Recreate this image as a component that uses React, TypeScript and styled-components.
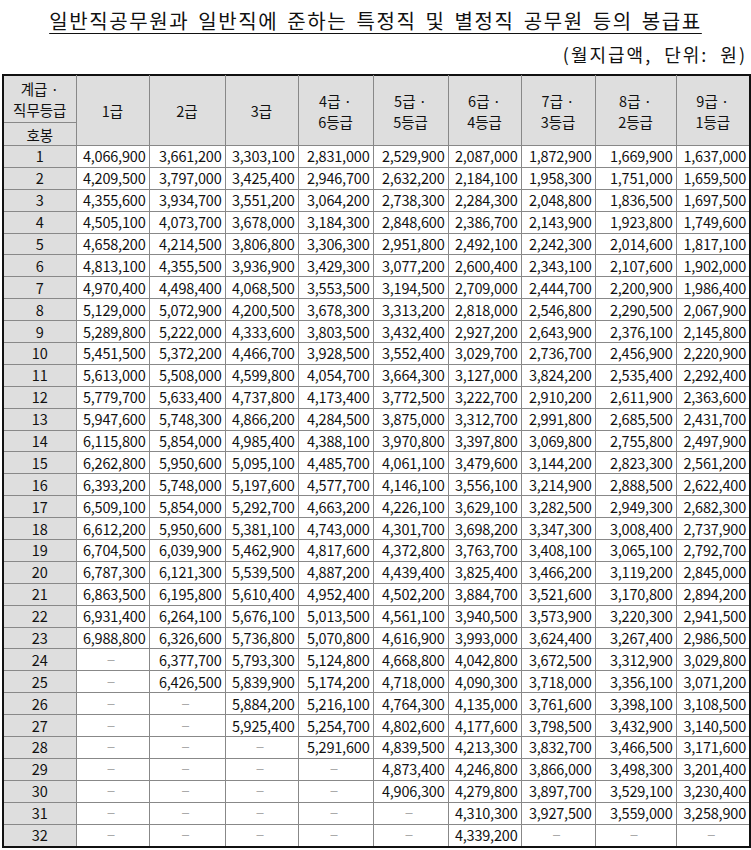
import React from 'react'
import styled, { createGlobalStyle } from 'styled-components'

const GlobalStyle = createGlobalStyle`
  body {
    margin: 0;
    background: #fff;
    font-family: "Noto Sans CJK KR", "Noto Sans", sans-serif;
  }
`

const Page = styled.div`
  width: 751px;
  padding: 7px 2px 0 2px;
  box-sizing: border-box;
`

const Title = styled.h1`
  margin: 0;
  text-align: center;
  font-size: 20px;
  font-weight: 400;
  letter-spacing: 1.6px;
  word-spacing: 3px;
  line-height: 28px;
  color: #111;
  text-decoration: underline;
  text-underline-offset: 4px;
  text-decoration-thickness: 1px;
`

const Unit = styled.div`
  text-align: right;
  font-size: 18px;
  letter-spacing: 2px;
  word-spacing: 6px;
  line-height: 26px;
  margin: 6px 2px 7px 0;
  color: #111;
`

const Table = styled.table`
  width: 747px;
  border-collapse: collapse;
  table-layout: fixed;
  border: 2px solid #111;
  font-size: 14.5px;
  color: #111;
`

const HeadCell = styled.th<{ $h?: number }>`
  background: #dedede;
  font-weight: 400;
  border: 1px solid #888;
  height: ${p => p.$h ?? 22}px;
  padding: 0;
  line-height: 21px;
  text-align: center;
`

const StepCell = styled.td`
  background: #dedede;
  border: 1px solid #888;
  text-align: center;
  height: 20.9px;
  padding: 0;
  line-height: 20px;
`

const Cell = styled.td<{ $empty?: boolean }>`
  border: 1px solid #888;
  text-align: ${p => (p.$empty ? 'center' : 'right')};
  color: ${p => (p.$empty ? '#aaa' : '#111')};
  padding: 0 3px 0 0;
  height: 20.9px;
  line-height: 20px;
  letter-spacing: -0.2px;
  white-space: nowrap;
`

const widths = [73, 76, 73, 75, 75, 73, 74, 81, 74]
const grades = ['1급', '2급', '3급', '4급 ·\n6등급', '5급 ·\n5등급', '6급 ·\n4등급', '7급 ·\n3등급', '8급 ·\n2등급', '9급 ·\n1등급']

const raw = `4,066,900 3,661,200 3,303,100 2,831,000 2,529,900 2,087,000 1,872,900 1,669,900 1,637,000
4,209,500 3,797,000 3,425,400 2,946,700 2,632,200 2,184,100 1,958,300 1,751,000 1,659,500
4,355,600 3,934,700 3,551,200 3,064,200 2,738,300 2,284,300 2,048,800 1,836,500 1,697,500
4,505,100 4,073,700 3,678,000 3,184,300 2,848,600 2,386,700 2,143,900 1,923,800 1,749,600
4,658,200 4,214,500 3,806,800 3,306,300 2,951,800 2,492,100 2,242,300 2,014,600 1,817,100
4,813,100 4,355,500 3,936,900 3,429,300 3,077,200 2,600,400 2,343,100 2,107,600 1,902,000
4,970,400 4,498,400 4,068,500 3,553,500 3,194,500 2,709,000 2,444,700 2,200,900 1,986,400
5,129,000 5,072,900 4,200,500 3,678,300 3,313,200 2,818,000 2,546,800 2,290,500 2,067,900
5,289,800 5,222,000 4,333,600 3,803,500 3,432,400 2,927,200 2,643,900 2,376,100 2,145,800
5,451,500 5,372,200 4,466,700 3,928,500 3,552,400 3,029,700 2,736,700 2,456,900 2,220,900
5,613,000 5,508,000 4,599,800 4,054,700 3,664,300 3,127,000 3,824,200 2,535,400 2,292,400
5,779,700 5,633,400 4,737,800 4,173,400 3,772,500 3,222,700 2,910,200 2,611,900 2,363,600
5,947,600 5,748,300 4,866,200 4,284,500 3,875,000 3,312,700 2,991,800 2,685,500 2,431,700
6,115,800 5,854,000 4,985,400 4,388,100 3,970,800 3,397,800 3,069,800 2,755,800 2,497,900
6,262,800 5,950,600 5,095,100 4,485,700 4,061,100 3,479,600 3,144,200 2,823,300 2,561,200
6,393,200 5,748,000 5,197,600 4,577,700 4,146,100 3,556,100 3,214,900 2,888,500 2,622,400
6,509,100 5,854,000 5,292,700 4,663,200 4,226,100 3,629,100 3,282,500 2,949,300 2,682,300
6,612,200 5,950,600 5,381,100 4,743,000 4,301,700 3,698,200 3,347,300 3,008,400 2,737,900
6,704,500 6,039,900 5,462,900 4,817,600 4,372,800 3,763,700 3,408,100 3,065,100 2,792,700
6,787,300 6,121,300 5,539,500 4,887,200 4,439,400 3,825,400 3,466,200 3,119,200 2,845,000
6,863,500 6,195,800 5,610,400 4,952,400 4,502,200 3,884,700 3,521,600 3,170,800 2,894,200
6,931,400 6,264,100 5,676,100 5,013,500 4,561,100 3,940,500 3,573,900 3,220,300 2,941,500
6,988,800 6,326,600 5,736,800 5,070,800 4,616,900 3,993,000 3,624,400 3,267,400 2,986,500
- 6,377,700 5,793,300 5,124,800 4,668,800 4,042,800 3,672,500 3,312,900 3,029,800
- 6,426,500 5,839,900 5,174,200 4,718,000 4,090,300 3,718,000 3,356,100 3,071,200
- - 5,884,200 5,216,100 4,764,300 4,135,000 3,761,600 3,398,100 3,108,500
- - 5,925,400 5,254,700 4,802,600 4,177,600 3,798,500 3,432,900 3,140,500
- - - 5,291,600 4,839,500 4,213,300 3,832,700 3,466,500 3,171,600
- - - - 4,873,400 4,246,800 3,866,000 3,498,300 3,201,400
- - - - 4,906,300 4,279,800 3,897,700 3,529,100 3,230,400
- - - - - 4,310,300 3,927,500 3,559,000 3,258,900
- - - - - 4,339,200 - - -`

const rows = raw.split('\n').map(l => l.trim().split(' '))

export default function App() {
  return (
    <Page>
      <GlobalStyle />
      <Title>일반직공무원과 일반직에 준하는 특정직 및 별정직 공무원 등의 봉급표</Title>
      <Unit>(월지급액, 단위: 원)</Unit>
      <Table>
        <colgroup>
          <col style={{ width: 73 }} />
          {widths.map((w, i) => <col key={i} style={{ width: w }} />)}
        </colgroup>
        <thead>
          <tr>
            <HeadCell rowSpan={2} $h={46}>계급 ·<br />직무등급</HeadCell>
            {grades.map(g => (
              <HeadCell key={g} rowSpan={3}>
                {g.split('\n').map((s, i) => <div key={i}>{s}</div>)}
              </HeadCell>
            ))}
          </tr>
          <tr />
          <tr>
            <HeadCell $h={22}>호봉</HeadCell>
          </tr>
        </thead>
        <tbody>
          {rows.map((r, i) => (
            <tr key={i}>
              <StepCell>{i + 1}</StepCell>
              {r.map((v, j) => (
                <Cell key={j} $empty={v === '-'}>{v === '-' ? '−' : v}</Cell>
              ))}
            </tr>
          ))}
        </tbody>
      </Table>
    </Page>
  )
}
